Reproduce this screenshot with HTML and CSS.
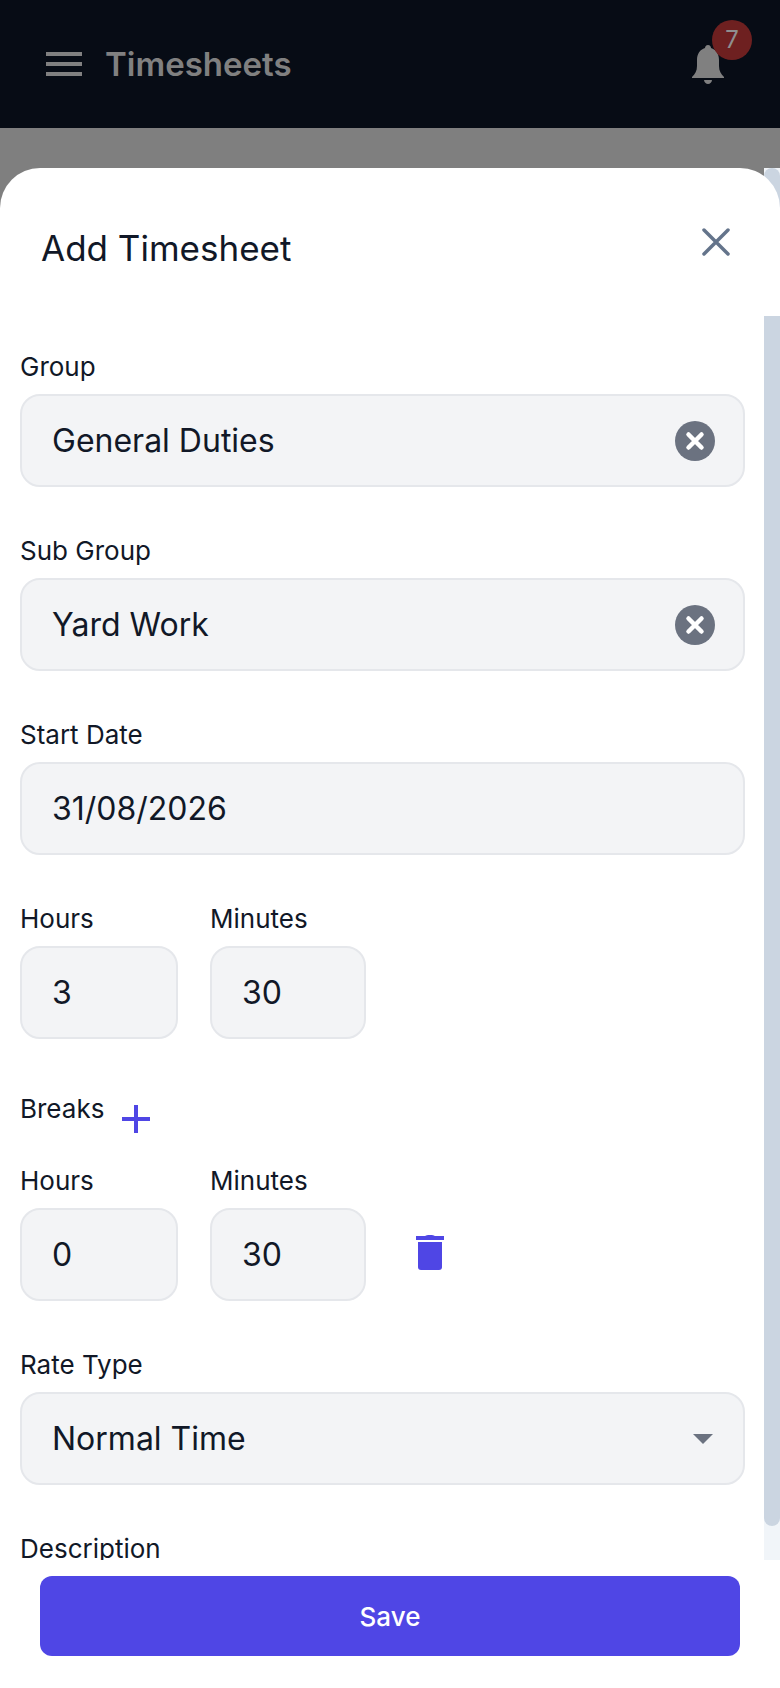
FILE: index.html
```html
<!DOCTYPE html>
<html lang="en">
<head>
    <meta charset="UTF-8">
    <meta name="viewport" content="width=device-width, initial-scale=1.0">
    <title>Timesheets</title>
    <link rel="stylesheet" href="styles.css">
</head>
<body>
    <header class="topbar">
        <div class="topbar-left">
            <svg class="menu-icon" viewBox="0 0 36 24"><path d="M0 2h36M0 12h36M0 22h36"/></svg>
            <span class="app-title">Timesheets</span>
        </div>
        <div class="bell">
            <svg class="bell-icon" viewBox="0 0 32 40"><path d="M16 1C18 1 19 2.5 19 4C24 5.5 27 10 27 16L27 22C27 27 29 30 32 33L32 34L0 34L0 33C3 30 5 27 5 22L5 16C5 10 8 5.5 13 4C13 2.5 14 1 16 1Z"/><path d="M12 36H20C20 38 18 40 16 40C14 40 12 38 12 36Z"/></svg>
            <span class="badge">7</span>
        </div>
    </header>

    <div class="backdrop">
        <section class="sheet">
            <div class="sheet-scroll">
                <div class="sheet-title">
                    <h1>Add Timesheet</h1>
                    <svg class="close-icon" viewBox="0 0 28 28"><path d="M2 2L26 26M26 2L2 26"/></svg>
                </div>
                <div class="scrollbar"><div class="scrollbar-thumb"></div></div>
                <form class="sheet-body">
                    <div class="group">
                        <div class="label">Group</div>
                        <div class="field">
                            <span>General Duties</span>
                            <svg class="clear-icon" viewBox="0 0 40 40"><circle cx="20" cy="20" r="20"/><path d="M13.5 13.5L26.5 26.5M26.5 13.5L13.5 26.5"/></svg>
                        </div>
                    </div>
                    <div class="group">
                        <div class="label">Sub Group</div>
                        <div class="field">
                            <span>Yard Work</span>
                            <svg class="clear-icon" viewBox="0 0 40 40"><circle cx="20" cy="20" r="20"/><path d="M13.5 13.5L26.5 26.5M26.5 13.5L13.5 26.5"/></svg>
                        </div>
                    </div>
                    <div class="group">
                        <div class="label">Start Date</div>
                        <div class="field"><span>31/08/2026</span></div>
                    </div>
                    <div class="time-row">
                        <div class="time-hours">
                            <div class="label">Hours</div>
                            <div class="field"><span>3</span></div>
                        </div>
                        <div class="time-minutes">
                            <div class="label">Minutes</div>
                            <div class="field"><span>30</span></div>
                        </div>
                    </div>
                    <div class="breaks-head">
                        <div class="label">Breaks</div>
                        <svg class="plus-icon" viewBox="0 0 28 28"><path d="M14 0V28M0 14H28"/></svg>
                    </div>
                    <div class="time-row break-row">
                        <div class="time-hours">
                            <div class="label">Hours</div>
                            <div class="field"><span>0</span></div>
                        </div>
                        <div class="time-minutes">
                            <div class="label">Minutes</div>
                            <div class="field"><span>30</span></div>
                        </div>
                        <svg class="trash-icon" viewBox="0 0 28 36"><path d="M9 2C10 0.5 18 0.5 19 2H28V6H0V2Z"/><path d="M2 8H26V33C26 35 25 36 23 36H5C3 36 2 35 2 33Z"/></svg>
                    </div>
                    <div class="group">
                        <div class="label">Rate Type</div>
                        <div class="field">
                            <span>Normal Time</span>
                            <span class="caret"></span>
                        </div>
                    </div>
                    <div class="group">
                        <div class="label">Description</div>
                    </div>
                </form>
            </div>
            <div class="sheet-footer">
                <button type="button" class="save-btn">Save</button>
            </div>
        </section>
    </div>
</body>
</html>
```

FILE: styles.css
```css
* {
    box-sizing: border-box;
}
body {
    margin: 0;
    height: 1688px;
    overflow: hidden;
    font-family: Inter, "Liberation Sans", sans-serif;
    color: #111827;
}
.topbar {
    height: 128px;
    background-color: #070c15;
    display: flex;
    align-items: center;
    justify-content: space-between;
    padding: 0 36px 0 46px;
}
.topbar-left {
    display: flex;
    align-items: center;
    gap: 23px;
}
.menu-icon {
    width: 36px;
    height: 24px;
    fill: none;
    stroke: #808080;
    stroke-width: 4;
}
.app-title {
    font-size: 33px;
    font-weight: 600;
    color: #808080;
}
.bell {
    position: relative;
    width: 32px;
    height: 40px;
    margin: 0 20px 0 0;
    top: 0;
}
.bell-icon {
    width: 32px;
    height: 40px;
    fill: #808080;
    display: block;
}
.badge {
    position: absolute;
    left: 20px;
    top: -24px;
    width: 40px;
    height: 40px;
    border-radius: 50%;
    background-color: #6e2020;
    color: #8f8f8f;
    font-size: 24px;
    line-height: 40px;
    text-align: center;
}
.backdrop {
    height: 1560px;
    padding-top: 40px;
    background-color: #7f7f7f;
}
.sheet {
    height: 1520px;
    display: flex;
    flex-direction: column;
}
.sheet-scroll {
    height: 1392px;
    overflow: hidden;
    display: grid;
    grid-template-columns: 1fr 16px;
    grid-template-rows: 148px 1fr;
}
.sheet-title {
    grid-column: 1 / -1;
    grid-row: 1;
    z-index: 1;
    background: white;
    border-radius: 40px 40px 0 0;
    display: flex;
    align-items: center;
    justify-content: space-between;
    padding: 24px 50px 25px 41px;
}
.sheet-title h1 {
    margin: 0;
    font-size: 35px;
    font-weight: 400;
    line-height: 44px;
    margin-top: 12px;
}
.close-icon {
    width: 28px;
    height: 28px;
    fill: none;
    stroke: #64748b;
    stroke-width: 3.5;
    stroke-linecap: round;
}
.scrollbar {
    grid-column: 2;
    grid-row: 1 / 3;
    background-color: #f1f5f9;
}
.scrollbar-thumb {
    height: 1358px;
    background-color: #cbd5e1;
    border-radius: 8px;
}
.sheet-body {
    grid-column: 1;
    grid-row: 2;
    background: white;
    padding: 31px 19px 0 20px;
}
.group {
    margin-bottom: 44px;
}
.label {
    font-size: 26px;
    line-height: 40px;
    margin-bottom: 7px;
}
.field {
    height: 93px;
    background-color: #f3f4f6;
    border: 2px solid #e5e7eb;
    border-radius: 20px;
    padding: 0 30px;
    font-size: 32px;
    display: flex;
    align-items: center;
    justify-content: space-between;
}
.clear-icon {
    width: 40px;
    height: 40px;
    margin-right: -2px;
}
.clear-icon circle {
    fill: #6b7280;
}
.clear-icon path {
    fill: none;
    stroke: white;
    stroke-width: 4.5;
    stroke-linecap: round;
}
.caret {
    width: 0;
    height: 0;
    margin-right: 0;
    border-left: 10px solid transparent;
    border-right: 10px solid transparent;
    border-top: 10px solid #6b7280;
}
.time-row {
    display: flex;
    align-items: flex-end;
    gap: 32px;
    margin-bottom: 50px;
}
.time-hours {
    width: 158px;
}
.time-minutes {
    width: 156px;
}
.breaks-head {
    display: flex;
    align-items: flex-start;
    gap: 18px;
    height: 72px;
}
.plus-icon {
    width: 28px;
    height: 28px;
    margin-top: 16px;
    fill: none;
    stroke: #4f46e5;
    stroke-width: 4;
}
.break-row {
    margin-bottom: 44px;
}
.trash-icon {
    width: 28px;
    height: 36px;
    fill: #4f46e5;
    margin: 0 0 31px 18px;
}
.sheet-footer {
    height: 128px;
    background: white;
    padding: 16px 40px 32px;
}
.save-btn {
    display: block;
    width: 700px;
    height: 80px;
    border: none;
    border-radius: 12px;
    background-color: #4f46e5;
    color: white;
    font-family: inherit;
    font-size: 26px;
    font-weight: 500;
}
```
